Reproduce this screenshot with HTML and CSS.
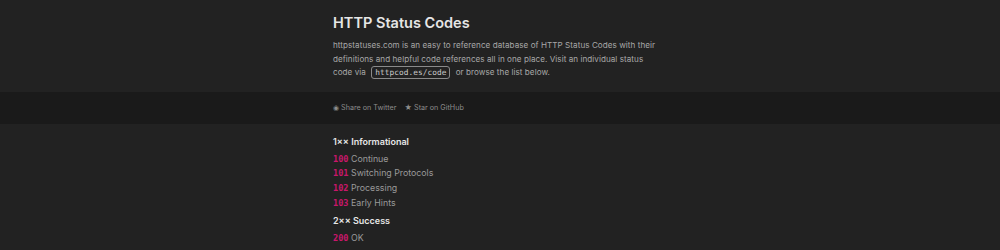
FILE: index.html
```html
<!DOCTYPE html>
<html>
<head>
  <link rel="stylesheet" href="styles.css">
</head>
<body>
  <header class="intro">
    <div class="wrap">
      <h1>HTTP Status Codes</h1>
      <p>httpstatuses.com is an easy to reference database of HTTP Status Codes with their definitions and helpful code references all in one place. Visit an individual status code via <code class="url">httpcod.es/code</code> or browse the list below.</p>
    </div>
  </header>

  <div class="share">
    <div class="wrap">
      <a href="#">&#9673; Share on Twitter</a>
      <a href="#">&#9733; Star on GitHub</a>
    </div>
  </div>

  <main class="wrap codes">
    <h2>1&times;&times; Informational</h2>
    <ul>
      <li><span class="num">100</span> Continue</li>
      <li><span class="num">101</span> Switching Protocols</li>
      <li><span class="num">102</span> Processing</li>
      <li><span class="num">103</span> Early Hints</li>
    </ul>
    <h2>2&times;&times; Success</h2>
    <ul>
      <li><span class="num">200</span> OK</li>
    </ul>
  </main>
</body>
</html>
```

FILE: styles.css
```css
body {
  margin: 0;
  background: #222222;
  color: #a8a8a8;
  font-family: Inter, "Noto Sans", sans-serif;
}

.wrap {
  width: 334px;
  margin: 0 auto;
}

.intro {
  padding: 14px 0 12px;
}

h1 {
  margin: 0 0 8px;
  font-size: 14.5px;
  font-weight: 600;
  color: #e6e6e6;
}

.intro p {
  max-width: 326px;
  margin: 0;
  font-size: 8.1px;
  line-height: 13.6px;
  letter-spacing: 0.05px;
}

.url {
  font-family: "DejaVu Sans Mono", monospace;
  font-size: 7.8px;
  color: #c8c8c8;
  border: 1px solid #8a8a8a;
  border-radius: 3px;
  padding: 1px 3px;
  margin: 0 3px;
}

.share {
  background: #1a1a1a;
  padding: 11px 0;
  font-size: 7.2px;
  line-height: 10px;
}

.share a {
  color: #8c8c8c;
  text-decoration: none;
  margin-right: 6px;
}

.codes {
  padding-top: 12px;
}

h2 {
  margin: 0 0 5px;
  font-size: 9px;
  font-weight: 600;
  color: #e6e6e6;
}

ul {
  list-style: none;
  margin: 0 0 5px;
  padding: 0;
}

li {
  font-size: 8.8px;
  line-height: 14.6px;
  color: #9a9a9a;
}

.num {
  font-family: "DejaVu Sans Mono", monospace;
  font-weight: bold;
  font-size: 8.6px;
  color: #c8176a;
}
```
